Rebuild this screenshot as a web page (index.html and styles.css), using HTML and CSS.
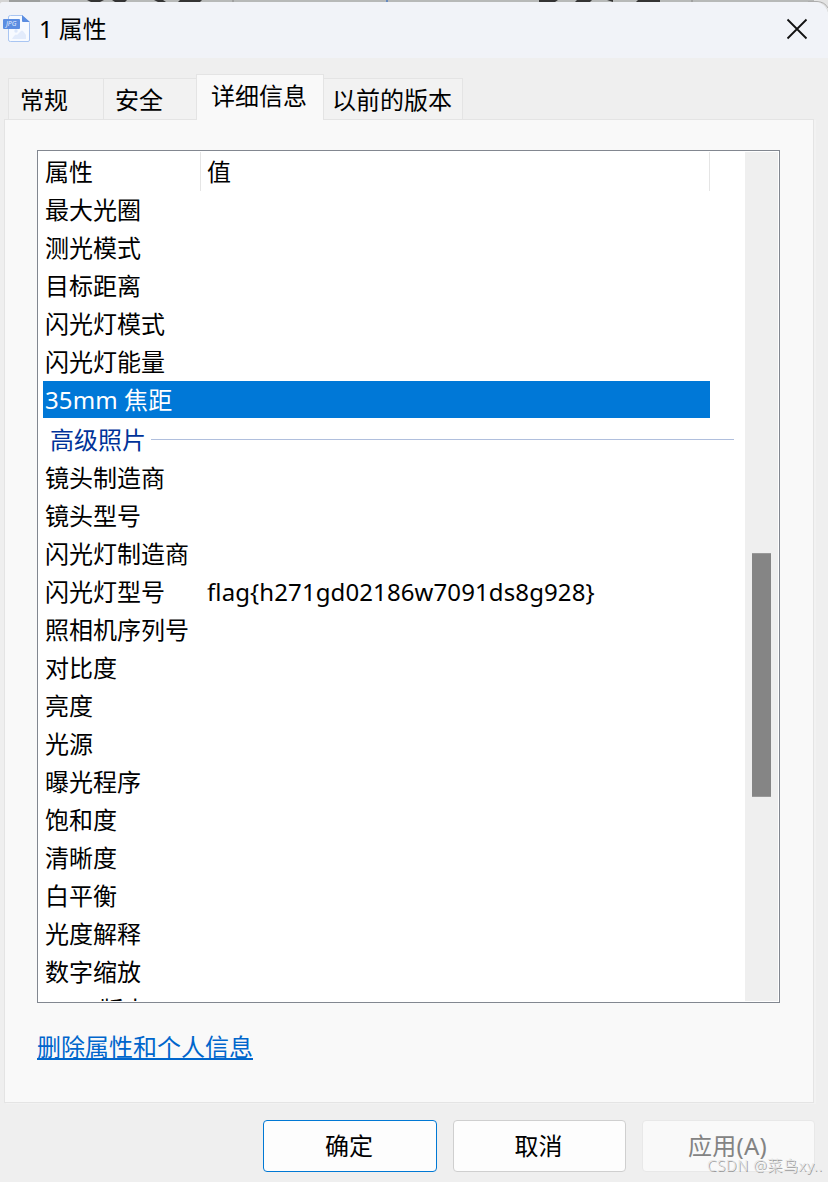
FILE: index.html
```html
<!DOCTYPE html>
<html lang="zh-CN">
<head>
<meta charset="utf-8">
<title>1 属性</title>
<link rel="stylesheet" href="styles.css">
</head>
<body>
<div class="desktop">
  <svg class="backdrop" width="828" height="12" viewBox="0 0 828 12">
    <rect width="828" height="12" fill="#b7b9b8"/>
    <rect width="9" height="12" fill="#d4d4d4"/><rect x="9" width="31" height="12" fill="#9d9f9e"/>
    <path d="M87 0h17l-4 2H91zM112 0h15l-2 2h-10zM154 0h9l3 2h-8zM180 0h22l-2 2h-22zM539 0h19l-3 2h-16zM577 0h15l-2 2h-15zM607 0h6v2zM638 0h22v2h-24z" fill="#343434"/>
    <path d="M233 0v2M692 0v2" stroke="#888"/><path d="M387 0v2" stroke="#668ac0" stroke-width="2"/>
    <path d="M814 0H828V12Q825 2 814 2z" fill="#e4e4e4"/>
    <path d="M808 1.5H817Q825 2 828 8" fill="none" stroke="#adadad"/>
  </svg>
  <main class="dialog">
    <header class="titlebar">
      <svg class="file-icon" width="28" height="30" viewBox="0 0 28 30">
        <path d="M7.500 1.500H19L26.500 8.500V26q0 1.500-1.500 1.500H7.500Q5.500 27.500 5.500 26V3Q5.500 1.500 7.500 1.500z" fill="#f7faff" stroke="#a9c5f2"/>
        <path d="M19 1L27 8H20Q19 8 19 7z" fill="#5b8de1"/>
        <path d="M9 25Q10 23 12 21Q13 20 14 21L18 17Q19 16 20 17L23 21V25z" fill="#e2ebfb"/><circle cx="13" cy="17" r="1.700" fill="#dce7fa"/>
        <rect y="5" width="17" height="10" rx="1" fill="#5b8de1"/>
        <text x="3" y="12.300" font-family="Open Sans, sans-serif" font-size="6.500" font-style="italic" textLength="10.500" lengthAdjust="spacingAndGlyphs" fill="#e8f0ff">JPG</text>
      </svg>
      <h1 class="title">1 属性</h1>
      <svg class="close" width="22" height="22" viewBox="0 0 22 22"><path d="M1.500 1.500L20.500 20.500M20.500 1.500L1.500 20.500" stroke="#111" stroke-width="1.800"/></svg>
    </header>
    <nav class="tabs">
      <div class="tab tab-general">常规</div>
      <div class="tab tab-security">安全</div>
      <div class="tab tab-details selected">详细信息</div>
      <div class="tab tab-versions">以前的版本</div>
    </nav>
    <section class="panel">
      <div class="listbox">
        <div class="list">
          <div class="row head"><span class="name">属性</span><span class="value">值</span></div>
          <div class="row"><span class="name">最大光圈</span></div>
          <div class="row"><span class="name">测光模式</span></div>
          <div class="row"><span class="name">目标距离</span></div>
          <div class="row"><span class="name">闪光灯模式</span></div>
          <div class="row"><span class="name">闪光灯能量</span></div>
          <div class="row active"><span class="name">35mm 焦距</span></div>
          <div class="group">高级照片</div>
          <div class="row"><span class="name">镜头制造商</span></div>
          <div class="row"><span class="name">镜头型号</span></div>
          <div class="row"><span class="name">闪光灯制造商</span></div>
          <div class="row"><span class="name">闪光灯型号</span><span class="value flag">flag{h271gd02186w7091ds8g928}</span></div>
          <div class="row"><span class="name">照相机序列号</span></div>
          <div class="row"><span class="name">对比度</span></div>
          <div class="row"><span class="name">亮度</span></div>
          <div class="row"><span class="name">光源</span></div>
          <div class="row"><span class="name">曝光程序</span></div>
          <div class="row"><span class="name">饱和度</span></div>
          <div class="row"><span class="name">清晰度</span></div>
          <div class="row"><span class="name">白平衡</span></div>
          <div class="row"><span class="name">光度解释</span></div>
          <div class="row"><span class="name">数字缩放</span></div>
          <div class="row"><span class="name">EXIF 版本</span></div>
        </div>
        <div class="scrollbar"><div class="thumb"></div></div>
      </div>
      <a class="remove">删除属性和个人信息</a>
    </section>
    <footer class="actions">
      <div class="button primary">确定</div>
      <div class="button">取消</div>
      <div class="button disabled">应用(A)</div>
    </footer>
  </main>
  <div class="watermark">CSDN @菜鸟xy..</div>
</div>
</body>
</html>
```
FILE: styles.css
```css
* { box-sizing: border-box; }
body { margin: 0; background: #efefef; color: #000; font: 24px/38px "Noto Sans", "Noto Sans CJK SC", sans-serif; font-weight: 400; }
.desktop { position: relative; width: 828px; height: 1182px; overflow: hidden; }
.backdrop { position: absolute; left: 0; top: 0; }
.dialog { position: relative; height: 1180px; margin-top: 2px; background: #efefef; border-radius: 3px 13px 0 0; overflow: hidden; display: flex; flex-direction: column; }
.titlebar { height: 56px; flex: none; background: #f1f3f8; display: flex; align-items: center; padding: 0 20px 2px 3px; }
.file-icon { flex: none; margin-right: 8px; }
.title { margin: 0; font-size: 24px; line-height: 38px; font-weight: 400; letter-spacing: -0.1px; flex: 1; }
.close { flex: none; }
.tabs { display: flex; align-items: flex-end; height: 62px; padding-left: 8px; flex: none; position: relative; z-index: 1; }
.tab { height: 42px; border: 1px solid #e4e4e4; border-bottom: 0; background: #f2f2f2; padding: 2px 0 0 11px; white-space: nowrap; }
.tab-general { width: 95px; border-right: 0; }
.tab-security { width: 93px; border-right: 0; }
.tab-versions { width: 139px; padding-left: 8px; border-left: 0; }
.tab:not(.selected) { border-bottom: 1px solid #e4e4e4; }
.tab.selected { width: 128px; height: 46px; padding-left: 14px; background: #f9f9f9; }
.panel { width: 810px; height: 984px; flex: none; margin-left: 4px; margin-top: -1px; background: #f9f9f9; border: 1px solid #e4e4e4; padding: 30px 0 0 32px; box-shadow: 2px 1px 0 #f2f2f2; }
.listbox { width: 743px; height: 853px; border: 1px solid #828790; padding: 1px; background: #fff; display: flex; }
.list { width: 706px; height: 849px; overflow: hidden; padding-left: 4px; flex: none; }
.row { width: 667px; height: 38px; display: flex; padding-left: 2px; white-space: nowrap; }
.name { width: 155px; flex: none; }
.head { height: 39px; border-right: 1px solid #e5e5e5; line-height: 40px; }
.head .value { border-left: 1px solid #e5e5e5; padding-left: 6px; }
.value { padding-left: 7px; }
.flag { letter-spacing: 0.1px; }
.active { height: 37px; margin-bottom: 1px; background: #0078d7; color: #fff; letter-spacing: 0.1px; }
.group { height: 40px; width: 691px; display: flex; align-items: center; padding-left: 7px; color: #003399; line-height: 40px; padding-top: 2px; }
.group::after { content: ""; height: 1px; background: #b0bfdd; flex: 1; margin: -2px 0 0 5px; }
.scrollbar { width: 33px; background: #efefef; padding: 401px 7px 0; }
.thumb { height: 244px; background: #858585; border: solid #999; border-width: 1px 0; }
.remove { display: inline-block; margin-top: 25px; color: #0066cc; text-decoration: underline; text-decoration-thickness: 2px; text-underline-offset: 2px; text-decoration-skip-ink: none; }
.actions { display: flex; gap: 16px; padding: 17px 0 0 263px; }
.button { width: 173px; height: 52px; flex: none; border: 1px solid #cfcfcf; border-radius: 4px; background: #fdfdfd; text-align: center; line-height: 50px; padding-right: 2px; }
.button.primary { width: 174px; border-color: #0078d4; }
.button.disabled { color: #838383; background: #f9f9f9; border-color: #e8e8e8; letter-spacing: 0.3px; }
.watermark { position: absolute; left: 707px; top: 1155px; font: 300 15px/20px "Noto Sans", "Noto Sans CJK SC", sans-serif; letter-spacing: 0.65px; color: #e5e5e5; text-shadow: 1px 1px 0 #999; white-space: nowrap; }
```
